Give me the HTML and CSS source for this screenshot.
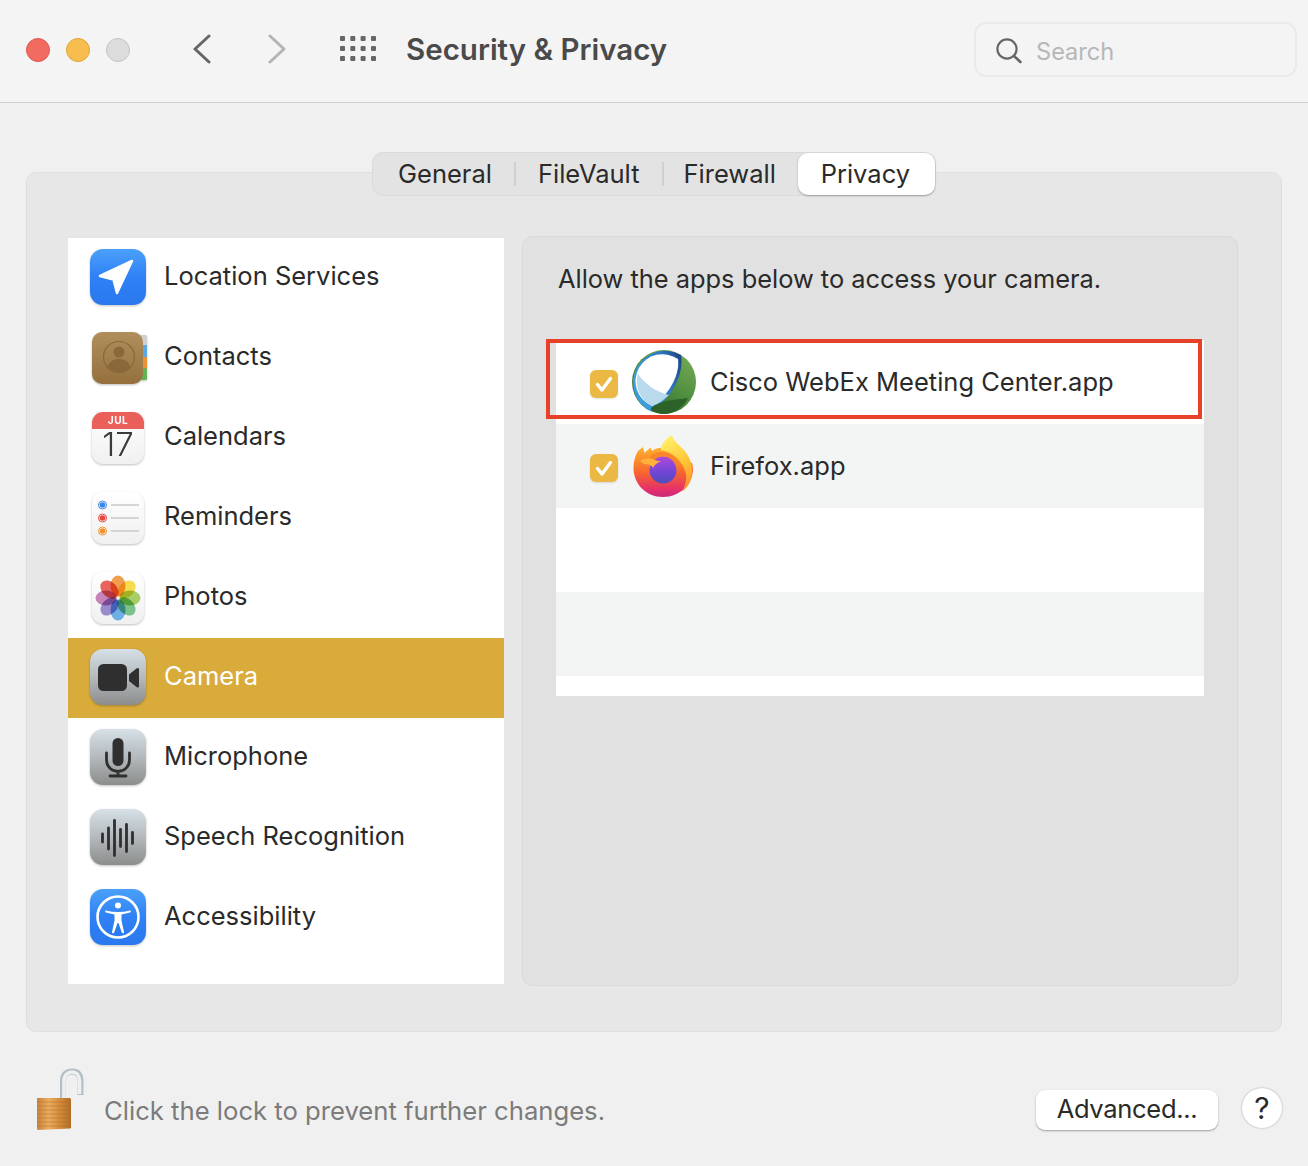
FILE: index.html
```html
<!DOCTYPE html>
<html lang="en">
<head>
<meta charset="utf-8">
<title>Security &amp; Privacy</title>
<link rel="stylesheet" href="styles.css">
</head>
<body>
<div class="window">
  <header class="toolbar">
    <div class="lights"><span class="light red"></span><span class="light yellow"></span><span class="light gray"></span></div>
    <svg class="nav-back" width="20" height="30" viewBox="0 0 20 30"><path d="M17 2 3 15l14 13" fill="none" stroke="#666" stroke-width="3" stroke-linecap="round" stroke-linejoin="round"/></svg>
    <svg class="nav-forward" width="20" height="30" viewBox="0 0 20 30"><path d="M3 2l14 13L3 28" fill="none" stroke="#b4b4b4" stroke-width="3" stroke-linecap="round" stroke-linejoin="round"/></svg>
    <svg class="nav-grid" width="36" height="26" viewBox="0 0 36 26" fill="#666"><rect x="0" y="0" width="5" height="5" rx="1"/><rect x="10.300" y="0" width="5" height="5" rx="1"/><rect x="20.600" y="0" width="5" height="5" rx="1"/><rect x="31" y="0" width="5" height="5" rx="1"/><rect x="0" y="10" width="5" height="5" rx="1"/><rect x="10.300" y="10" width="5" height="5" rx="1"/><rect x="20.600" y="10" width="5" height="5" rx="1"/><rect x="31" y="10" width="5" height="5" rx="1"/><rect x="0" y="20" width="5" height="5" rx="1"/><rect x="10.300" y="20" width="5" height="5" rx="1"/><rect x="20.600" y="20" width="5" height="5" rx="1"/><rect x="31" y="20" width="5" height="5" rx="1"/></svg>
    <h1 class="title">Security &amp; Privacy</h1>
    <div class="search">
      <svg width="26" height="26" viewBox="0 0 26 26"><circle cx="11" cy="11" r="9.600" fill="none" stroke="#666" stroke-width="2.200"/><path d="M18 18l6.400 6" stroke="#666" stroke-width="2.600" stroke-linecap="round"/></svg>
      <span class="search-text">Search</span>
    </div>
  </header>

  <main class="content">
    <nav class="tabs">
      <span class="tab tab-general">General</span><span class="sep"></span>
      <span class="tab tab-filevault">FileVault</span><span class="sep"></span>
      <span class="tab tab-firewall">Firewall</span>
      <span class="tab tab-active">Privacy</span>
    </nav>

    <section class="panel">
      <ul class="sidebar">
        <li class="row">
          <svg class="row-icon" width="60" height="60" viewBox="0 0 60 60"><defs><linearGradient id="blue" x1="0" y1="0" x2="0" y2="1"><stop offset="0" stop-color="#4aa0fa"/><stop offset=".5" stop-color="#2f81f5"/><stop offset="1" stop-color="#2a78ee"/></linearGradient></defs><rect x="2" y="2" width="56" height="56" rx="13" fill="url(#blue)"/><path d="M44 14 12 29l13.500 3.500L29 46z" fill="#fff" stroke="#fff" stroke-width="2.500" stroke-linejoin="round"/></svg>
          <span class="label">Location Services</span>
        </li>
        <li class="row">
          <svg class="row-icon" width="60" height="60" viewBox="0 0 60 60"><defs><linearGradient id="leather" x1="0" y1="0" x2="0" y2="1"><stop offset="0" stop-color="#b08f5c"/><stop offset="1" stop-color="#94703d"/></linearGradient></defs><rect x="50" y="8" width="9" height="12" rx="2" fill="#cfcfcb"/><rect x="53" y="18" width="6" height="13" fill="#58a9e6"/><rect x="53" y="30" width="6" height="12" fill="#e8923a"/><rect x="53" y="41" width="6" height="12" rx="1.500" fill="#5fb255"/><rect x="4" y="5" width="51" height="52" rx="10" fill="url(#leather)"/><circle cx="31" cy="30" r="15.500" fill="none" stroke="#8a683a" stroke-width="1.200"/><circle cx="31" cy="25" r="5.500" fill="#8a683a"/><path d="M19.500 40c2-6 7-8 11.500-8s9.500 2 11.500 8c-3 3-7 5-11.500 5s-8.500-2-11.500-5z" fill="#8a683a"/></svg>
          <span class="label">Contacts</span>
        </li>
        <li class="row">
          <svg class="row-icon" width="60" height="60" viewBox="0 0 60 60"><defs><linearGradient id="paper" x1="0" y1="0" x2="0" y2="1"><stop offset="0" stop-color="#fff"/><stop offset="1" stop-color="#f0f0f0"/></linearGradient><clipPath id="calclip"><rect x="4" y="5" width="52" height="52" rx="11"/></clipPath></defs><g clip-path="url(#calclip)"><rect x="4" y="5" width="52" height="52" fill="url(#paper)"/><rect x="4" y="5" width="52" height="17" fill="#e9605a"/></g><text class="cal-month" x="30" y="16.500" text-anchor="middle">JUL</text><text class="cal-day" x="30" y="49" text-anchor="middle">17</text></svg>
          <span class="label">Calendars</span>
        </li>
        <li class="row">
          <svg class="row-icon" width="60" height="60" viewBox="0 0 60 60"><rect x="4" y="5" width="52" height="52" rx="11" fill="url(#paper)"/><circle cx="14.500" cy="18" r="4" fill="#fff" stroke="#3a86e8" stroke-width="1"/><circle cx="14.500" cy="18" r="2.800" fill="#3a86e8"/><circle cx="14.500" cy="31" r="4" fill="#fff" stroke="#e5483f" stroke-width="1"/><circle cx="14.500" cy="31" r="2.800" fill="#e5483f"/><circle cx="14.500" cy="44" r="4" fill="#fff" stroke="#ee9130" stroke-width="1"/><circle cx="14.500" cy="44" r="2.800" fill="#ee9130"/><path d="M23 18h28M23 31h28M23 44h28" stroke="#c9c9c9" stroke-width="1.600"/></svg>
          <span class="label">Reminders</span>
        </li>
        <li class="row">
          <svg class="row-icon" width="60" height="60" viewBox="0 0 60 60"><rect x="4" y="5" width="52" height="52" rx="11" fill="url(#paper)"/><g class="petals" transform="translate(30 31)"><ellipse cy="-12" rx="7.500" ry="10.500" fill="#f0953a"/><ellipse cy="-12" rx="7.500" ry="10.500" fill="#f6d83f" transform="rotate(45)"/><ellipse cy="-12" rx="7.500" ry="10.500" fill="#9dc856" transform="rotate(90)"/><ellipse cy="-12" rx="7.500" ry="10.500" fill="#6dbb7e" transform="rotate(135)"/><ellipse cy="-12" rx="7.500" ry="10.500" fill="#5fa7e3" transform="rotate(180)"/><ellipse cy="-12" rx="7.500" ry="10.500" fill="#8f80c8" transform="rotate(225)"/><ellipse cy="-12" rx="7.500" ry="10.500" fill="#bf78b0" transform="rotate(270)"/><ellipse cy="-12" rx="7.500" ry="10.500" fill="#e5544c" transform="rotate(315)"/></g></svg>
          <span class="label">Photos</span>
        </li>
        <li class="row selected">
          <svg class="row-icon" width="60" height="60" viewBox="0 0 60 60"><defs><linearGradient id="steel" x1="0" y1="0" x2="0" y2="1"><stop offset="0" stop-color="#d6e0e6"/><stop offset=".5" stop-color="#b4babd"/><stop offset="1" stop-color="#8c8c8c"/></linearGradient></defs><rect x="2" y="2" width="56" height="56" rx="13" fill="url(#steel)"/><rect x="10" y="17" width="29" height="27" rx="5.500" fill="#2f2f2f"/><path d="M41 27.500 48.500 21.500c1.500-1 2.500-.5 2.500 1V39c0 1.500-1 2-2.500 1L41 34z" fill="#2f2f2f"/></svg>
          <span class="label">Camera</span>
        </li>
        <li class="row">
          <svg class="row-icon" width="60" height="60" viewBox="0 0 60 60"><rect x="2" y="2" width="56" height="56" rx="13" fill="url(#steel)"/><rect x="24.500" y="11" width="11" height="28" rx="5.500" fill="#2f2f2f"/><path d="M18.500 26v7a11.500 11.500 0 0 0 23 0v-7M30 44.500V48M22 49h16" fill="none" stroke="#2f2f2f" stroke-width="2.800" stroke-linecap="round"/></svg>
          <span class="label">Microphone</span>
        </li>
        <li class="row">
          <svg class="row-icon" width="60" height="60" viewBox="0 0 60 60"><rect x="2" y="2" width="56" height="56" rx="13" fill="url(#steel)"/><path d="M14.500 27v8M20.500 21v21M26.500 13.500v35M32.500 22.500v17M38.500 17.500v27M44.500 25.500v11" stroke="#2f2f2f" stroke-width="2.800" stroke-linecap="round"/></svg>
          <span class="label">Speech Recognition</span>
        </li>
        <li class="row">
          <svg class="row-icon" width="60" height="60" viewBox="0 0 60 60"><rect x="2" y="2" width="56" height="56" rx="13" fill="url(#blue)"/><circle cx="30" cy="30" r="20.500" fill="none" stroke="#fff" stroke-width="2.600"/><circle cx="30" cy="18.500" r="3" fill="#fff"/><path d="M18 23.500c4 1 8 1.500 12 1.500s8-.5 12-1.500c1.200 0 1.200 1.600 0 2l-8.500 2v6l2.500 11.500c.2 1.500-1.800 1.800-2.200.5L30.500 36h-1L26.200 45.500c-.4 1.300-2.400 1-2.200-.5l2.500-11.500v-6l-8.500-2c-1.200-.4-1.200-2 0-2z" fill="#fff"/></svg>
          <span class="label">Accessibility</span>
        </li>
      </ul>

      <div class="detail">
        <p class="detail-title">Allow the apps below to access your camera.</p>
        <div class="app-list">
          <div class="app-row">
            <span class="check"><svg width="28" height="28" viewBox="0 0 28 28"><path d="M7.500 14.500l4.500 5.500 8.500-11.500" fill="none" stroke="#fff" stroke-width="3.400" stroke-linecap="round" stroke-linejoin="round"/></svg></span>
            <svg class="app-icon webex" width="64" height="64" viewBox="0 0 64 64"><defs><linearGradient id="wxg" x1=".9" y1=".2" x2=".4" y2="1"><stop offset="0" stop-color="#6ea552"/><stop offset=".6" stop-color="#4a8a3c"/><stop offset="1" stop-color="#2f6a2c"/></linearGradient><linearGradient id="wxb" x1="0" y1=".4" x2="1" y2="0"><stop offset="0" stop-color="#3d9fdf"/><stop offset=".6" stop-color="#2f79c2"/><stop offset="1" stop-color="#1b3f7d"/></linearGradient></defs><circle cx="32" cy="32" r="32" fill="url(#wxg)"/><path d="M19 61.500A32 32 0 1 1 49 5C52 22 42 47 19 61.500z" fill="url(#wxb)"/><path d="M20 56A27 27 0 1 1 46 9C48 24 38 44 20 56z" fill="#fff"/><path d="M6 24C13 34 24 42 37 45 32 50 26 54 20 56A27 27 0 0 1 6 24z" fill="#b9d9ec"/><path d="M19 58C30 50 42 50 56 48 52 56 42 64 32 64 27 64 23 62 19 60z" fill="#2c6128"/></svg>
            <span class="app-name">Cisco WebEx Meeting Center.app</span>
          </div>
          <div class="app-row alt">
            <span class="check"><svg width="28" height="28" viewBox="0 0 28 28"><path d="M7.500 14.500l4.500 5.500 8.500-11.500" fill="none" stroke="#fff" stroke-width="3.400" stroke-linecap="round" stroke-linejoin="round"/></svg></span>
            <svg class="app-icon firefox" width="64" height="64" viewBox="0 0 64 64"><defs><linearGradient id="ffo" x1=".5" y1="0" x2=".5" y2="1"><stop offset="0" stop-color="#ffb32c"/><stop offset=".5" stop-color="#f8672d"/><stop offset=".85" stop-color="#e52f6b"/><stop offset="1" stop-color="#c92a7a"/></linearGradient><linearGradient id="ffy" x1=".3" y1="0" x2=".7" y2="1"><stop offset="0" stop-color="#fff067"/><stop offset=".6" stop-color="#ffc233"/><stop offset="1" stop-color="#ff8c2a"/></linearGradient><linearGradient id="ffp" x1=".5" y1="0" x2=".5" y2="1"><stop offset="0" stop-color="#b04ad8"/><stop offset=".6" stop-color="#6f45d6"/><stop offset="1" stop-color="#4d4fb8"/></linearGradient></defs><path d="M31 63C14 63 1.500 50 1.500 34 1.500 27 3.500 21 6 17L11 13l1.500 6 6-5.500L20 17C26 13 32 13 38 16L60 29c.5 2 1 4 1 6C61 50 48 63 31 63z" fill="url(#ffo)"/><path d="M29 16C29 9 34 5 40 1c1 5 5 8 10 13 6 6 10 13 10 23 0 10-4 16-10 21 3-6 5-12 4-18-2-9-8-16-14-20-3-2-7-3-11-4z" fill="url(#ffy)"/><circle cx="31" cy="36" r="13.500" fill="url(#ffp)"/><path d="M17 24c5-7 17-8 24-2 4 3.500 5 9 4 14-1-6-4-11-9-13-6-2-12 0-15 4-1-1-3-2-4-3z" fill="#f9852a"/><path d="M8 27c5-3 10-3 15-1 2 1 4 1 6 1-4 2-7 4-8 7-1-3-6-4-9-4z" fill="#ffb13a"/></svg>
            <span class="app-name">Firefox.app</span>
          </div>
          <div class="app-row"></div>
          <div class="app-row alt"></div>
          <div class="app-row short"></div>
          <div class="highlight"></div>
        </div>
      </div>
    </section>
  </main>

  <footer class="footer">
    <svg class="lock" width="48" height="62" viewBox="0 0 48 62"><defs><linearGradient id="brass" x1="0" y1="0" x2="1" y2="0"><stop offset="0" stop-color="#c9833a"/><stop offset=".35" stop-color="#eaae62"/><stop offset=".7" stop-color="#d1883a"/><stop offset="1" stop-color="#b06f28"/></linearGradient></defs><path d="M27 32V13C27 6 31 3.500 36 3.500s8.500 2.500 8.500 9.500v14" fill="none" stroke="#b4bec3" stroke-width="6"/><path d="M28 32V13C28 7 32 4 36 4s7.500 3 7.500 9v13" fill="none" stroke="#edf0f1" stroke-width="3.600"/><path d="M1 30h33l1 1v29l-1 .5L2 62l-1-1z" fill="url(#brass)"/><path d="M1 34h34M1 38h34M1 42h34M1 46h34M1 50h34M1 54h34M1 58h34" stroke="#a9661f" stroke-opacity=".45" stroke-width="1"/></svg>
    <span class="lock-text">Click the lock to prevent further changes.</span>
    <span class="spacer"></span>
    <button class="advanced" type="button">Advanced...</button>
    <button class="help" type="button">?</button>
  </footer>
</div>
</body>
</html>
```

FILE: styles.css
```css
* { box-sizing: border-box; }
html, body { margin: 0; padding: 0; }
body {
  width: 1308px;
  height: 1166px;
  overflow: hidden;
  background: #f0f0f0;
  font-family: Inter, "Liberation Sans", sans-serif;
  color: #2a2a2a;
  font-size: 25.5px;
}
.window { display: flex; flex-direction: column; height: 1166px; }

/* toolbar */
.toolbar {
  height: 103px;
  flex: none;
  display: flex;
  align-items: center;
  padding-left: 26px;
  padding-bottom: 4px;
  background: #f4f4f4;
  border-bottom: 1px solid #cfcfcf;
}
.lights { display: flex; gap: 16px; margin-top: 2px; }
.light { width: 24px; height: 24px; border-radius: 50%; display: block; border: 1px solid; }
.red { background: #f26b60; border-color: #dc5a50; }
.yellow { background: #f7be4f; border-color: #dfa437; }
.gray { background: #dcdcdc; border-color: #c5c5c5; }
.nav-back { margin-left: 62px; }
.nav-forward { margin-left: 55px; }
.nav-grid { margin-left: 53px; }
.title {
  margin: 0 0 0 30px;
  font-size: 29.5px;
  font-weight: 600;
  color: #4a4a4a;
  line-height: 36px;
}
.search {
  margin-left: auto;
  margin-right: 11px;
  margin-top: 1px;
  width: 323px;
  height: 55px;
  padding-top: 3px;
  border: 2px solid #eaeaea;
  border-radius: 12px;
  display: flex;
  align-items: center;
  padding-left: 20px;
  gap: 14px;
}
.search-text { color: #b7b7b7; font-size: 23.6px; }

/* content */
.content { padding: 49px 26px 0; flex: none; }
.tabs {
  position: relative;
  z-index: 1;
  width: 564px;
  height: 44px;
  margin: 0 0 -24px 346px;
  display: flex;
  align-items: center;
  background: #e3e3e3;
  border: 1px solid #dadada;
  border-radius: 11px;
}
.tab { line-height: 40px; }
.tab-general { margin-left: 25px; }
.tab-firewall { margin-left: -2px; }
.sep { width: 2px; height: 24px; background: #d0d0d0; margin: 0 22px; }
.tab-active {
  margin-left: 22px;
  width: 137px;
  height: 42px;
  line-height: 42px;
  padding-right: 2px;
  background: #fff;
  border-radius: 10px;
  box-shadow: 0 1px 2px rgba(0,0,0,.3);
  text-align: center;
}
.panel {
  height: 860px;
  background: #e7e7e7;
  border: 1px solid #dfdfdf;
  border-radius: 10px;
  padding: 64px 0 0 41px;
  display: flex;
  gap: 18px;
  align-items: flex-start;
}
.sidebar {
  list-style: none;
  margin: 0;
  padding: 0;
  width: 436px;
  height: 747px;
  background: #fff;
  border-top: 1px solid #e3e3e3;
}
.row {
  height: 80px;
  display: flex;
  align-items: center;
  padding-left: 20px;
  gap: 16px;
}
.row-icon {
  display: block;
  flex: none;
  margin-top: -2px;
  filter: drop-shadow(0 1px 1px rgba(0,0,0,.25));
}
.label { line-height: 32px; margin-top: -4px; }
.selected { background: #d9ab3b; color: #fff; }
.cal-month { font: 700 10px Inter, sans-serif; fill: #fff; letter-spacing: .5px; }
.cal-day { font: 300 33px Inter, sans-serif; fill: #3a3a3a; }
.petals { isolation: isolate; }
.petals ellipse { opacity: .9; mix-blend-mode: multiply; }

/* detail */
.detail {
  width: 716px;
  height: 750px;
  margin-top: -1px;
  background: #e1e1e1;
  border: 1px solid #dadada;
  border-radius: 10px;
  padding: 25px 0 0 33px;
}
.detail-title { margin: 0 0 44px 2px; line-height: 34px; font-size: 25.4px; }
.app-list {
  position: relative;
  width: 648px;
  height: 356px;
  background: #fff;
}
.app-row {
  height: 84px;
  display: flex;
  align-items: center;
  padding-left: 34px;
}
.app-row.alt { background: #f3f5f4; }
.app-row.short { height: 20px; }
.check {
  width: 28px;
  height: 28px;
  border-radius: 6px;
  background: #ebb943;
  box-shadow: 0 1px 2px rgba(0,0,0,.12);
  display: block;
  margin-top: 4px;
  flex: none;
}
.check svg { display: block; }
.app-icon { margin-left: 14px; flex: none; }
.app-name { margin-left: 14px; line-height: 32px; }
.highlight {
  position: absolute;
  left: -10px;
  top: -1px;
  width: 656px;
  height: 80px;
  border: 4px solid #e8412a;
}

/* footer */
.footer {
  flex: none;
  display: flex;
  align-items: flex-start;
  padding: 0 26px 0 36px;
}
.lock { margin-top: 36px; flex: none; }
.lock-text { margin: 63px 0 0 20px; line-height: 32px; color: #7b7b7b; font-size: 25.65px; }
.spacer { flex: 1; }
.advanced {
  margin-top: 58px;
  width: 182px;
  height: 40px;
  background: #fff;
  border: none;
  border-radius: 9px;
  box-shadow: 0 1px 2px rgba(0,0,0,.35);
  font: inherit;
  letter-spacing: -.3px;
  color: #2a2a2a;
  padding: 0 0 3px;
}
.help {
  margin: 56px 0 0 24px;
  width: 40px;
  height: 40px;
  border-radius: 50%;
  background: #fff;
  border: none;
  box-shadow: 0 0 2px rgba(0,0,0,.35);
  font: 400 30px Inter, sans-serif;
  color: #2a2a2a;
  padding: 0;
}
```
